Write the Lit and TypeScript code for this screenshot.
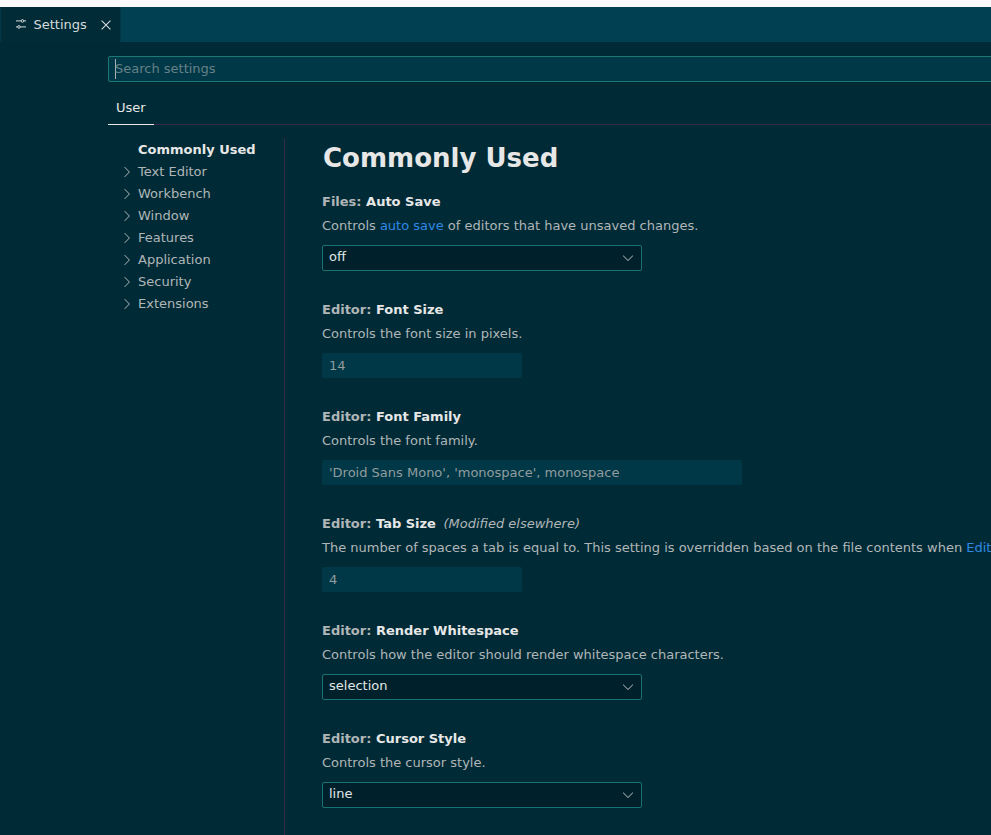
import { LitElement, html, css, svg } from "lit";
import { customElement } from "lit/decorators.js";

interface Setting {
  category: string;
  label: string;
  note?: string;
  description: unknown;
  kind: "select" | "text";
  wide?: boolean;
  value: string;
}

const SETTINGS: Setting[] = [
  { category: "Files", label: "Auto Save", description: html`Controls <a>auto save</a> of editors that have unsaved changes.`, kind: "select", value: "off" },
  { category: "Editor", label: "Font Size", description: "Controls the font size in pixels.", kind: "text", value: "14" },
  { category: "Editor", label: "Font Family", description: "Controls the font family.", kind: "text", wide: true, value: "'Droid Sans Mono', 'monospace', monospace" },
  { category: "Editor", label: "Tab Size", note: "(Modified elsewhere)", description: html`The number of spaces a tab is equal to. This setting is overridden based on the file contents when <a>Editor</a>`, kind: "text", value: "4" },
  { category: "Editor", label: "Render Whitespace", description: "Controls how the editor should render whitespace characters.", kind: "select", value: "selection" },
  { category: "Editor", label: "Cursor Style", description: "Controls the cursor style.", kind: "select", value: "line" },
];

const SECTIONS = ["Text Editor", "Workbench", "Window", "Features", "Application", "Security", "Extensions"];

const icon = (shape: unknown) => html`<svg width="16" height="16" viewBox="0 0 16 16" fill="none" stroke="currentColor">${shape}</svg>`;
const chevronRight = svg`<path d="M5.6 3.1 10.4 8l-4.8 4.9"/>`;
const chevronDown = svg`<path d="M3.1 5.7 8 10.5l4.9-4.8"/>`;
const close = svg`<path d="M3.6 3.6l8.8 8.8M12.4 3.6l-8.8 8.8" stroke-width="1.1"/>`;
const sliders = svg`<path d="M3 4.9h5.2M10.8 4.9H13M3 10.9h1.7M7.3 10.9H13"/><circle cx="9.5" cy="4.9" r="1.3"/><circle cx="6" cy="10.9" r="1.3"/>`;

@customElement("app-root")
export class AppRoot extends LitElement {
  static styles = css`
    :host {
      display: flex;
      flex-direction: column;
      box-sizing: border-box;
      height: 835px;
      width: 991px;
      overflow: hidden;
      border-top: 7px solid #fafafa;
      background: #002b36;
      color: #b0b6b8;
      font: 13px/18px "DejaVu Sans", sans-serif;
      white-space: nowrap;
    }
    * { box-sizing: border-box; }
    svg { display: block; flex: none; }
    a { color: #3088e6; }
    .tabs { display: flex; flex: none; height: 35px; background: #004052; }
    .tab {
      display: flex;
      align-items: center;
      width: 121px;
      padding-left: 12px;
      border-left: 1px solid #003847;
      border-right: 1px solid #003847;
      background: #002b37;
      color: #d6dbdb;
    }
    .tab span { margin: 0 11px 0 4.5px; }
    .tab svg { margin-top: -1px; }
    .tab svg:last-child { margin: 0 0 0 0.5px; }
    .header { flex: none; margin: 14px 0 0 108px; }
    .search {
      display: flex;
      align-items: center;
      height: 26px;
      width: 900px;
      padding-left: 6px;
      border: 1px solid #197a73;
      border-radius: 2px;
      background: #003847;
      color: #668187;
    }
    .caret { width: 1px; height: 20px; margin-right: -1px; background: #a9b1b3; }
    .scopes { display: flex; height: 43px; border-bottom: 1px solid #362b4a; }
    .scope {
      height: 43px;
      padding: 17px 8px 0;
      width: 46px;
      border-bottom: 1px solid #e7e7e7;
      color: #e7e7e7;
    }
    .body { display: flex; flex: 1; min-height: 0; margin-top: 14px; }
    .toc { flex: none; width: 285px; padding-left: 119px; border-right: 1px solid #362b4a; }
    .entry { display: flex; align-items: center; height: 22px; gap: 3px; line-height: 22px; }
    .current { padding-left: 19px; font-weight: bold; color: #e7e7e7; }
    .content { flex: 1; min-width: 0; padding: 1px 0 0 37px; }
    h1 { margin: 0 0 16px 1px; font-size: 26px; line-height: 37px; color: #e7e7e7; }
    .setting { margin-bottom: 30px; }
    .title { font-weight: bold; }
    .title b { color: #e7e7e7; }
    .title i { font-weight: normal; margin-left: 3px; }
    .desc { margin: 6px 0 10px; }
    .text {
      height: 25px;
      width: 200px;
      padding: 4px 7px;
      border-radius: 2px;
      background: #003847;
      color: #929c9e;
    }
    .wide { width: 420px; }
    .select {
      display: flex;
      justify-content: space-between;
      height: 26px;
      width: 320px;
      padding: 2px 5px 0 6px;
      border: 1px solid #197271;
      border-radius: 2px;
      background: #00212b;
      color: #e2e6e6;
    }
    .select svg { margin-top: 2px; color: #c0c6c8; }
  `;

  private renderSetting(s: Setting) {
    return html`<div class="setting">
      <div class="title">${s.category}: <b>${s.label}</b>${s.note ? html` <i>${s.note}</i>` : ""}</div>
      <div class="desc">${s.description}</div>
      ${s.kind === "select"
        ? html`<div class="select"><span>${s.value}</span>${icon(chevronDown)}</div>`
        : html`<div class="text ${s.wide ? "wide" : ""}">${s.value}</div>`}
    </div>`;
  }

  render() {
    return html`
      <div class="tabs"><div class="tab">${icon(sliders)}<span>Settings</span>${icon(close)}</div></div>
      <div class="header">
        <div class="search"><div class="caret"></div>Search settings</div>
        <div class="scopes"><div class="scope">User</div></div>
      </div>
      <div class="body">
        <nav class="toc">
          <div class="entry current">Commonly Used</div>
          ${SECTIONS.map((name) => html`<div class="entry">${icon(chevronRight)}<span>${name}</span></div>`)}
        </nav>
        <main class="content">
          <h1>Commonly Used</h1>
          ${SETTINGS.map((s) => this.renderSetting(s))}
        </main>
      </div>
    `;
  }
}
